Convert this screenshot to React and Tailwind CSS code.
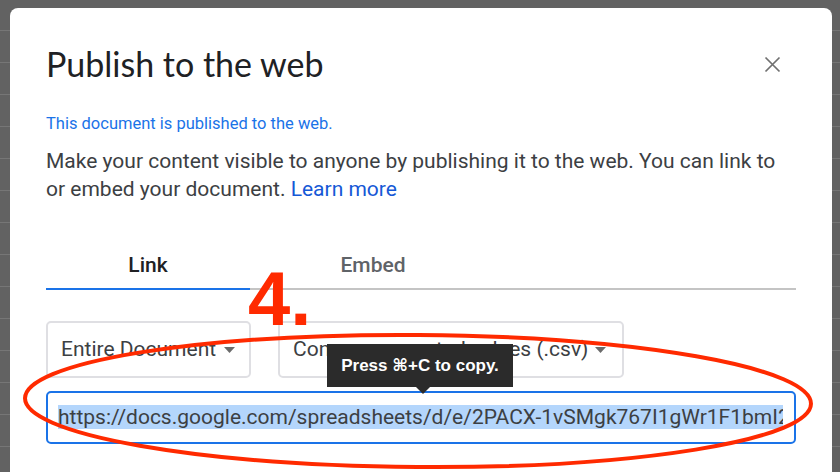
import React from "react";

export default function App() {
  return (
    <div className="relative h-[472px] w-[840px] overflow-hidden bg-[#626262] bg-[repeating-linear-gradient(180deg,#626262_0px,#626262_30px,#767676_30px,#767676_31px,#626262_31px,#626262_32px)]">
      <div
        className="ml-[10px] mt-[8px] h-[480px] w-[822px] rounded-t-[8px] bg-white pl-[36px] pr-[36px]"
        style={{ fontFamily: "Roboto, 'Liberation Sans', sans-serif" }}
      >
        <div className="flex items-start justify-between pt-[36px]">
          <h1
            className="text-[34px] leading-[40px] text-[#202124]"
            style={{ fontFamily: "Lato, Roboto, sans-serif" }}
          >
            Publish to the web
          </h1>
          <button className="mt-[10px] mr-[14px] flex h-[20px] w-[20px] items-center justify-center">
            <svg width="17" height="17" viewBox="0 0 17 17">
              <path d="M1.5 1.5 L15.5 15.5 M15.5 1.5 L1.5 15.5" stroke="#707070" strokeWidth="1.7" fill="none" />
            </svg>
          </button>
        </div>
        <p className="mt-[30px] text-[16.5px] leading-[20px] text-[#1a73e8]">
          This document is published to the web.
        </p>
        <p className="mt-[13px] text-[21px] leading-[28px] text-[#3c4043]">
          Make your content visible to anyone by publishing it to the web. You can link to
          <br />
          or embed your document. <span className="text-[#1558d6]">Learn more</span>
        </p>
        <div className="mt-[50px] flex w-[750px] border-b-2 border-[#c4c4c4]">
          <div className="-mb-[2px] flex w-[204px] justify-center border-b-2 border-[#1a73e8] pb-[11px] text-[21px] font-medium leading-[24px] text-[#202124]">
            Link
          </div>
          <div className="flex w-[246px] justify-center pb-[11px] text-[21px] font-medium leading-[24px] text-[#5f6368]">
            Embed
          </div>
        </div>
        <div className="mt-[31px] flex gap-[27px]">
          <div className="flex h-[57px] w-[205px] items-center justify-between rounded-[5px] border-2 border-[#dfdfe3] pl-[13px] pr-[14px] text-[21px] text-[#3c4043]">
            <span className="whitespace-nowrap">Entire Document</span>
            <svg width="11" height="6" viewBox="0 0 11 6" className="shrink-0">
              <path d="M0 0 L11 0 L5.5 6 Z" fill="#6b6b6b" />
            </svg>
          </div>
          <div className="flex h-[57px] w-[346px] items-center justify-between rounded-[5px] border-2 border-[#dfdfe3] pl-[13px] pr-[16px] text-[21px] text-[#3c4043]">
            <span className="whitespace-nowrap">Comma-separated values (.csv)</span>
            <svg width="11" height="6" viewBox="0 0 11 6" className="shrink-0">
              <path d="M0 0 L11 0 L5.5 6 Z" fill="#6b6b6b" />
            </svg>
          </div>
        </div>
        <div className="mt-[13px] flex h-[53px] w-[750px] items-center overflow-hidden rounded-[5px] border-2 border-[#1a73e8] pl-[10px] pr-[11px]">
          <div className="overflow-hidden whitespace-nowrap">
            <span className="bg-[#b4d6fc] text-[21px] leading-[27px] text-[#3c4043]">
              https://docs.google.com/spreadsheets/d/e/2PACX-1vSMgk767I1gWr1F1bmI2
            </span>
          </div>
        </div>
      </div>

      {/* Tooltip */}
      <div
        className="absolute left-[327px] top-[344px] flex h-[43px] w-[186px] items-center justify-center bg-[#2b2b2b] text-[17px] font-bold text-white"
        style={{ fontFamily: "'Liberation Sans', 'DejaVu Sans', sans-serif" }}
      >
        Press ⌘+C to copy.
        <div className="absolute left-[89px] top-[43px] h-0 w-0 border-x-[7px] border-t-[7px] border-x-transparent border-t-[#2b2b2b]" />
      </div>

      {/* Step number */}
      <div
        className="absolute left-[248px] top-[259px] text-[76px] font-bold leading-[80px] text-[#ff2a00]"
        style={{ fontFamily: "'Liberation Sans', Arial, sans-serif" }}
      >
        4.
      </div>

      {/* Red ellipse */}
      <svg className="pointer-events-none absolute left-0 top-0" width="840" height="472">
        <ellipse cx="418" cy="401" rx="393" ry="66" fill="none" stroke="#ff2a00" strokeWidth="4" transform="rotate(0.4 418 401)" />
      </svg>
    </div>
  );
}
